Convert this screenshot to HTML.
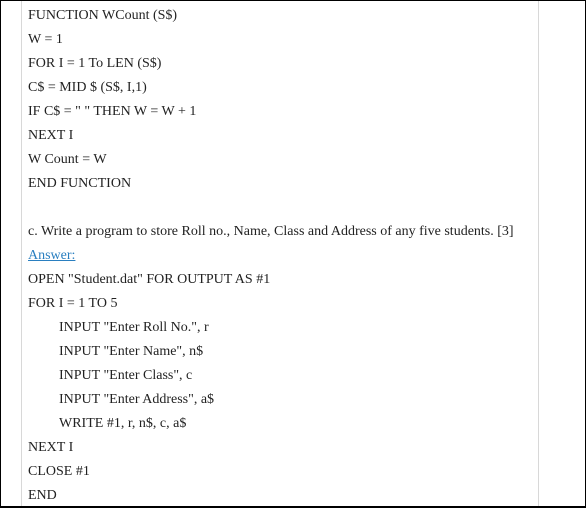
<!DOCTYPE html>
<html><head><meta charset="utf-8"><style>
html,body{margin:0;padding:0;}
body{width:586px;height:508px;overflow:hidden;background:#fff;position:relative;box-sizing:border-box;border:1px solid #000;border-bottom:2px solid #000;}
.vl{position:absolute;top:0;bottom:0;width:1px;background:#d8d8d8;}
.t{position:absolute;left:27px;top:3px;font-family:"Liberation Serif",serif;font-size:14px;color:#222;line-height:24px;white-space:nowrap;}
.t div{height:24px;}
.i{padding-left:31px;}
a{color:#2a7fc0;text-decoration:underline;}
</style></head><body>
<div class="vl" style="left:20px"></div>
<div class="vl" style="left:537px"></div>
<div class="t"><div>FUNCTION WCount (S$)</div><div>W = 1</div><div>FOR I = 1 To LEN (S$)</div><div>C$ = MID $ (S$, I,1)</div><div>IF C$ = "&nbsp;" THEN W = W + 1</div><div>NEXT I</div><div>W Count = W</div><div>END FUNCTION</div><div></div><div>c. Write a program to store Roll no., Name, Class and Address of any five students. [3]</div><div><a>Answer:</a></div><div>OPEN "Student.dat" FOR OUTPUT AS #1</div><div>FOR I = 1 TO 5</div><div class="i">INPUT "Enter Roll No.", r</div><div class="i">INPUT "Enter Name", n$</div><div class="i">INPUT "Enter Class", c</div><div class="i">INPUT "Enter Address", a$</div><div class="i">WRITE #1, r, n$, c, a$</div><div>NEXT I</div><div>CLOSE #1</div><div>END</div></div>
</body></html>
